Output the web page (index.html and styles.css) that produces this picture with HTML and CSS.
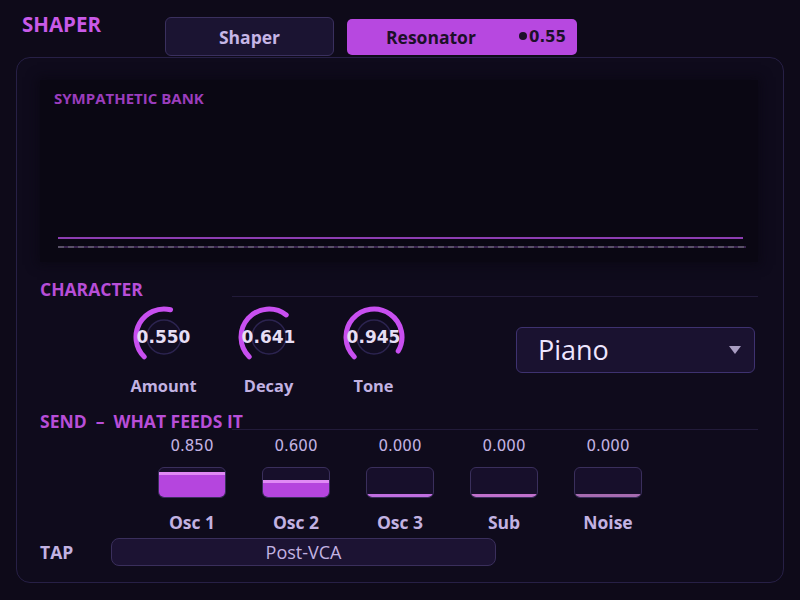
FILE: index.html
```html
<!DOCTYPE html>
<html>
<head>
<meta charset="utf-8">
<link rel="stylesheet" href="styles.css">
</head>
<body>
<header class="top">
  <div class="title">SHAPER</div>
  <div class="tab tab-off">Shaper</div>
  <div class="tab tab-on"><span class="tab-label">Resonator</span><span class="tab-val"><span class="dot"></span>0.55</span></div>
</header>
<main class="panel">
  <section class="graph">
    <div class="graph-label">SYMPATHETIC BANK</div>
    <div class="graph-space"></div>
    <div class="line-solid"></div>
    <div class="line-dash"></div>
  </section>

  <div class="sec-head">
    <div class="sec-title">CHARACTER</div>
    <div class="sec-line"></div>
  </div>
  <div class="char-row">
    <div class="knobs">
      <div class="knob">
        <div class="dial">
          <svg width="64" height="64" viewBox="0 0 64 64">
            <circle cx="32" cy="32" r="17" fill="#120d22" stroke="#2c2450" stroke-width="1.5"/>
            <path d="M12.2 51.8 A28 28 0 0 1 38.54 4.77" fill="none" stroke="#c84ff0" stroke-width="5" stroke-linecap="round"/>
          </svg>
          <span class="dial-val">0.550</span>
        </div>
        <div class="knob-label">Amount</div>
      </div>
      <div class="knob">
        <div class="dial">
          <svg width="64" height="64" viewBox="0 0 64 64">
            <circle cx="32" cy="32" r="17" fill="#120d22" stroke="#2c2450" stroke-width="1.5"/>
            <path d="M12.2 51.8 A28 28 0 0 1 49.26 9.96" fill="none" stroke="#c84ff0" stroke-width="5" stroke-linecap="round"/>
          </svg>
          <span class="dial-val">0.641</span>
        </div>
        <div class="knob-label">Decay</div>
      </div>
      <div class="knob">
        <div class="dial">
          <svg width="64" height="64" viewBox="0 0 64 64">
            <circle cx="32" cy="32" r="17" fill="#120d22" stroke="#2c2450" stroke-width="1.5"/>
            <path d="M12.2 51.8 A28 28 0 1 1 56.21 46.07" fill="none" stroke="#c84ff0" stroke-width="5" stroke-linecap="round"/>
          </svg>
          <span class="dial-val">0.945</span>
        </div>
        <div class="knob-label">Tone</div>
      </div>
    </div>
    <div class="select">
      <span class="select-text">Piano</span>
      <svg class="select-arrow" width="12" height="8" viewBox="0 0 12 8"><polygon points="0,0 12,0 6,8" fill="#a99dc2"/></svg>
    </div>
  </div>

  <div class="sec-head sec-send">
    <div class="sec-title">SEND &nbsp;–&nbsp; WHAT FEEDS IT</div>
    <div class="sec-line"></div>
  </div>
  <div class="send-row">
    <div class="send">
      <div class="send-val">0.850</div>
      <div class="send-box"><div class="send-fill" style="height:85%"></div></div>
      <div class="send-label">Osc 1</div>
    </div>
    <div class="send">
      <div class="send-val">0.600</div>
      <div class="send-box"><div class="send-fill" style="height:60%"></div></div>
      <div class="send-label">Osc 2</div>
    </div>
    <div class="send">
      <div class="send-val">0.000</div>
      <div class="send-box"><div class="send-fill zero z1"></div></div>
      <div class="send-label">Osc 3</div>
    </div>
    <div class="send">
      <div class="send-val">0.000</div>
      <div class="send-box"><div class="send-fill zero z2"></div></div>
      <div class="send-label">Sub</div>
    </div>
    <div class="send">
      <div class="send-val">0.000</div>
      <div class="send-box"><div class="send-fill zero z3"></div></div>
      <div class="send-label">Noise</div>
    </div>
  </div>

  <div class="tap-row">
    <div class="tap-label">TAP</div>
    <div class="tap-box">Post-VCA</div>
  </div>
</main>
</body>
</html>
```
FILE: styles.css
```css
html, body {
  margin: 0;
  padding: 0;
}
body {
  width: 800px;
  height: 600px;
  overflow: hidden;
  background: #0e0a19;
  font-family: "Open Sans", "DejaVu Sans", sans-serif;
  color: #c4b4e4;
}

/* header */
.top {
  display: flex;
  align-items: flex-start;
  height: 57px;
  padding-left: 22px;
  box-sizing: border-box;
}
.title {
  width: 143px;
  flex: none;
  margin-top: 12px;
  font-size: 20.5px;
  line-height: 24px;
  font-weight: bold;
  color: #c95ae8;
}
.tab {
  box-sizing: border-box;
  display: flex;
  align-items: center;
  font-size: 17.5px;
  font-weight: bold;
}
.tab-off {
  width: 169px;
  height: 39px;
  margin-top: 17px;
  justify-content: center;
  background: #1b1432;
  border: 1px solid #3a305e;
  border-radius: 6px;
  color: #c6b6e6;
}
.tab-on {
  width: 230px;
  height: 36px;
  margin-top: 19px;
  margin-left: 13px;
  padding: 0 11px 0 39px;
  justify-content: space-between;
  background: #b748e0;
  border-radius: 5px;
  color: #1c1028;
}
.tab-val {
  display: flex;
  align-items: center;
  font-family: "DejaVu Sans", sans-serif;
  font-size: 15px;
}
.dot {
  width: 8px;
  height: 8px;
  border-radius: 50%;
  background: #1c1028;
  margin-right: 2px;
  margin-top: -3px;
}

/* panel */
.panel {
  display: flex;
  flex-direction: column;
  box-sizing: border-box;
  height: 526px;
  margin: 0 16px;
  padding: 22px 25px 0 23px;
  border: 1px solid #272046;
  border-radius: 14px;
  background: #0f0b1c;
}

.graph {
  display: flex;
  flex-direction: column;
  box-sizing: border-box;
  height: 182px;
  padding: 9px 12px 14px 14px;
  background: #0a0713;
  box-shadow: 0 0 10px 3px rgba(10, 7, 19, 0.7);
}
.graph-label {
  font-size: 15px;
  line-height: 18px;
  font-weight: bold;
  color: #9b3dbd;
}
.graph-space {
  flex: 1;
}
.line-solid {
  height: 2px;
  margin: 0 3px 0 4px;
  background: #8d3db2;
}
.line-dash {
  height: 2px;
  margin: 7px 0 0 4px;
  background: repeating-linear-gradient(90deg, #5a5168 0 6px, #3a2350 6px 10px);
}

/* section headers */
.sec-head {
  display: flex;
  align-items: flex-end;
  height: 20px;
  margin-top: 17px;
}
.sec-title {
  width: 192px;
  flex: none;
  font-size: 17.5px;
  line-height: 20px;
  font-weight: bold;
  color: #b84ed8;
  white-space: nowrap;
}
.sec-line {
  flex: 1;
  height: 1px;
  margin-bottom: 2px;
  background: #221b3a;
}
.sec-send {
  margin-top: 15px;
}
.sec-send .sec-line {
  margin-bottom: 1px;
}

/* knobs */
.char-row {
  display: flex;
  align-items: flex-start;
  margin-top: 6px;
}
.knobs {
  display: flex;
  margin-left: 71px;
}
.knob {
  width: 105px;
  display: flex;
  flex-direction: column;
  align-items: center;
}
.dial {
  display: grid;
  width: 64px;
  height: 64px;
}
.dial svg,
.dial-val {
  grid-area: 1 / 1;
}
.dial svg {
  display: block;
}
.dial-val {
  align-self: center;
  justify-self: center;
  font-family: "DejaVu Sans", sans-serif;
  font-size: 17px;
  font-weight: bold;
  color: #e6def4;
}
.knob-label {
  margin-top: 7px;
  font-size: 16.4px;
  line-height: 20px;
  font-weight: bold;
  color: #c2b2e2;
}

.select {
  display: flex;
  align-items: center;
  justify-content: space-between;
  box-sizing: border-box;
  width: 239px;
  height: 46px;
  margin-top: 22px;
  margin-left: 90px;
  padding: 0 13px 0 21px;
  background: #1a1230;
  border: 1px solid #3e3270;
  border-radius: 6px;
}
.select-text {
  font-size: 27px;
  line-height: 30px;
  color: #eee6ff;
}

/* sends */
.send-row {
  display: flex;
  margin-left: 100px;
}
.send {
  width: 104px;
  display: flex;
  flex-direction: column;
  align-items: center;
}
.send-val {
  margin-top: 5px;
  font-family: "DejaVu Sans", sans-serif;
  font-size: 15px;
  line-height: 20px;
  color: #c2b2e2;
}
.send-box {
  display: flex;
  flex-direction: column;
  justify-content: flex-end;
  box-sizing: border-box;
  width: 68px;
  height: 31px;
  margin-top: 11px;
  overflow: hidden;
  background: #170f2b;
  border: 1px solid #3a2f5c;
  border-radius: 6px;
}
.send-fill {
  box-sizing: border-box;
  background: #b545de;
  border-top: 3px solid #e08af5;
}
.send-fill.zero {
  height: 0;
  background: transparent;
}
.z1 { border-top-color: #c06ee0; }
.z2 { border-top-color: #c070cc; }
.z3 { border-top-color: #a66bb0; }
.send-label {
  margin-top: 14px;
  font-size: 17.5px;
  line-height: 20px;
  font-weight: bold;
  color: #c2b2e2;
}

/* tap */
.tap-row {
  display: flex;
  align-items: center;
  margin-top: 6px;
}
.tap-label {
  width: 71px;
  flex: none;
  font-size: 17.5px;
  font-weight: bold;
  color: #c2b2e2;
}
.tap-box {
  display: flex;
  align-items: center;
  justify-content: center;
  box-sizing: border-box;
  width: 385px;
  height: 28px;
  background: #1c1333;
  border: 1px solid #3a2f5c;
  border-radius: 8px;
  font-size: 18px;
  color: #c2b2e2;
}
```
